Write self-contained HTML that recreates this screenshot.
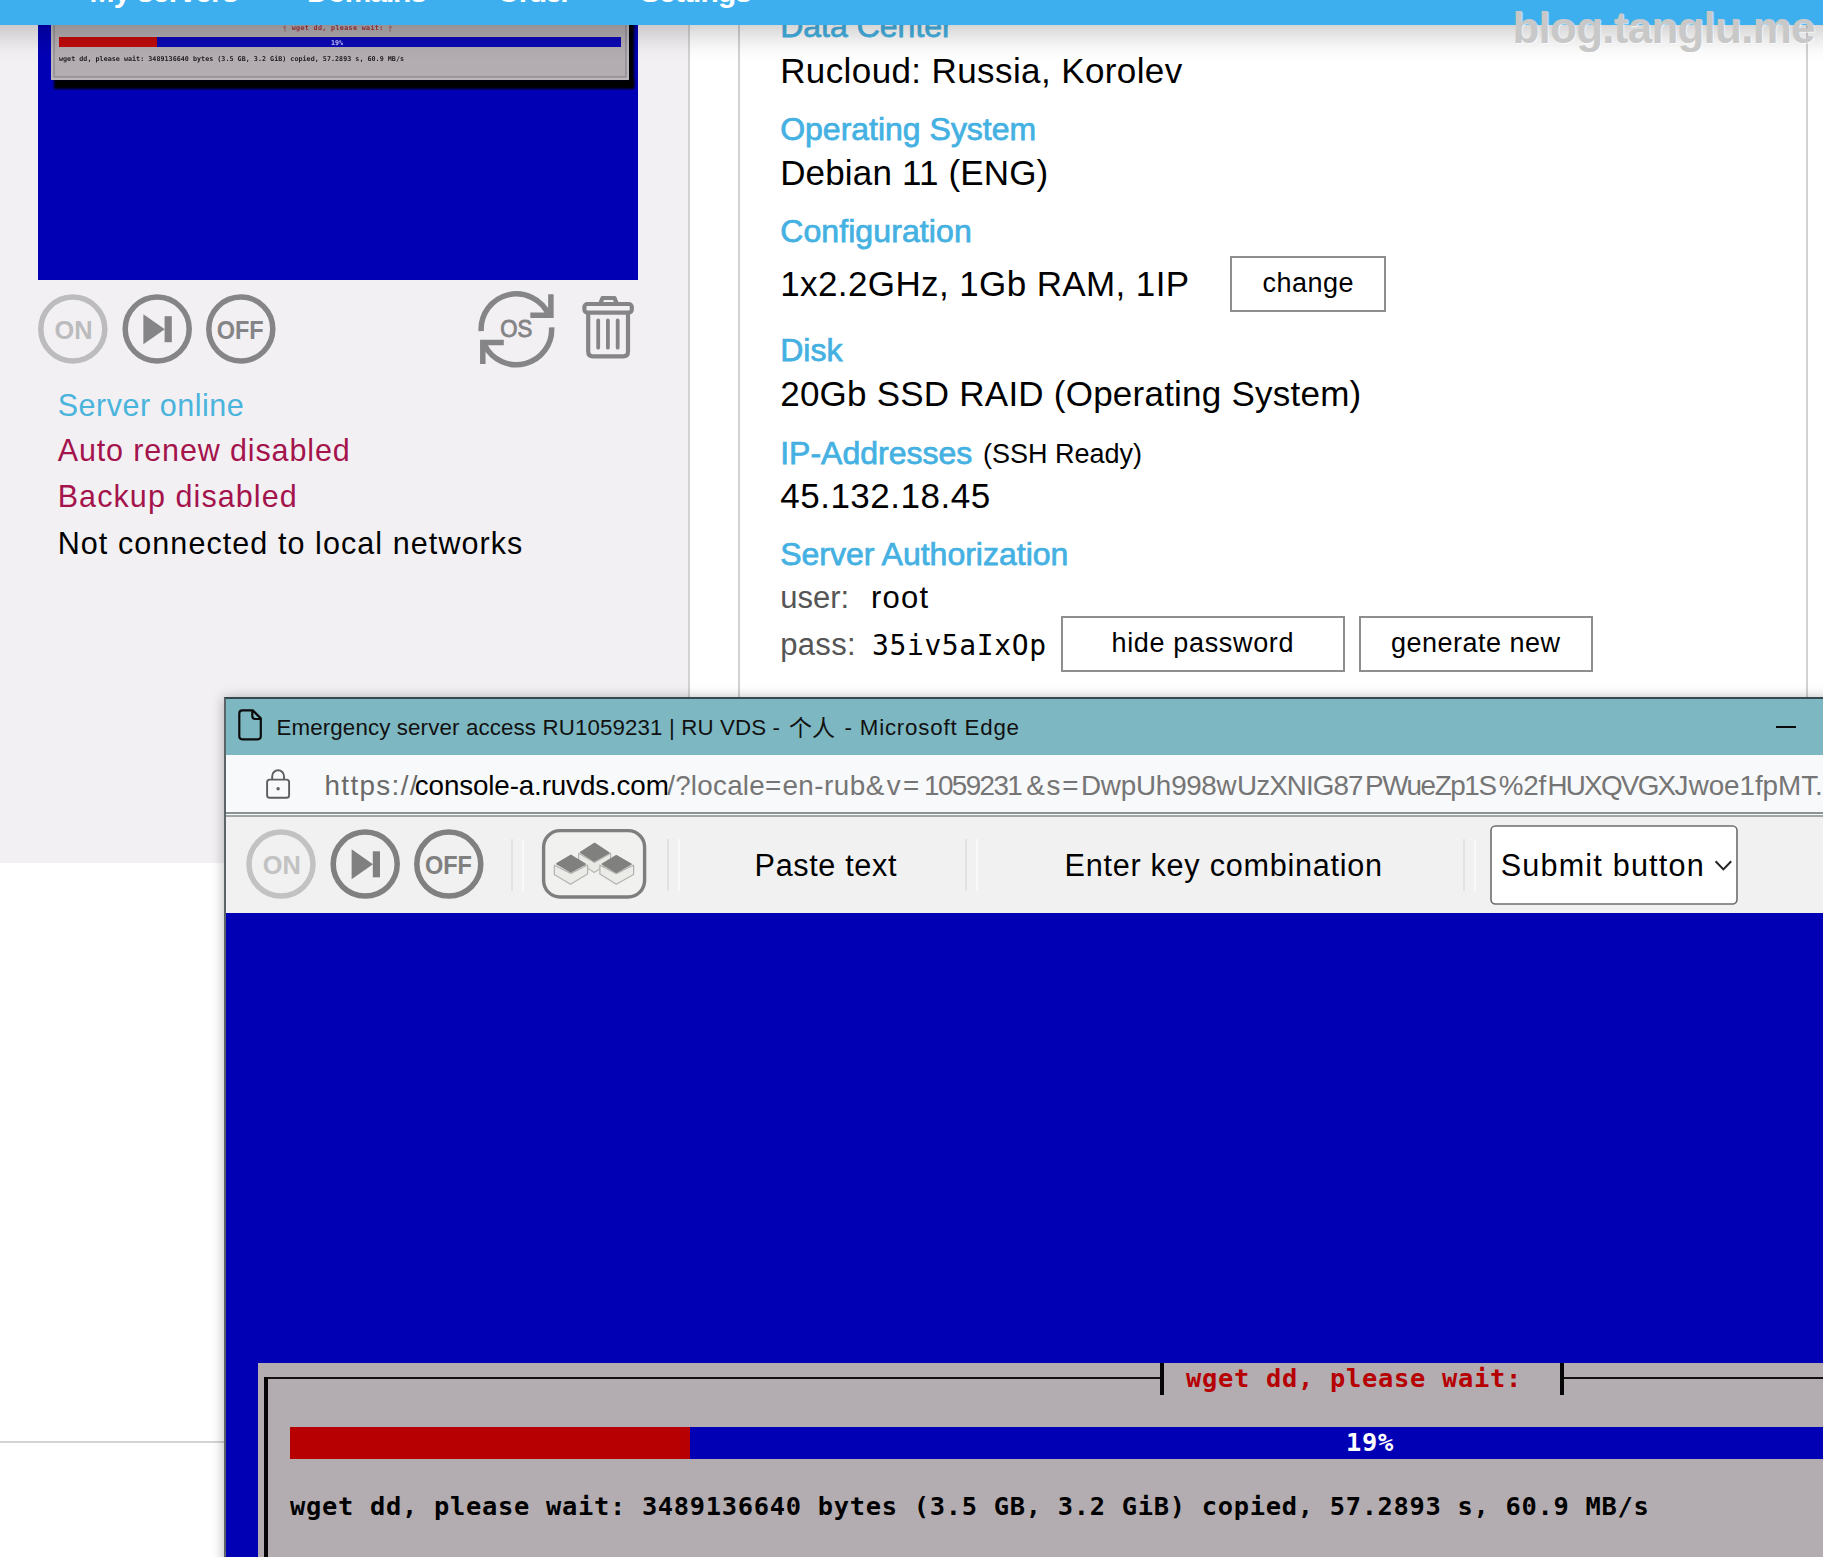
<!DOCTYPE html>
<html lang="en"><head><meta charset="utf-8"><title>Emergency server access RU1059231 | RU VDS</title>
<style>
html,body{margin:0;padding:0}
body{width:1823px;height:1557px;position:relative;overflow:hidden;background:#fff;font-family:"Liberation Sans",sans-serif}
.t{position:absolute;white-space:pre;line-height:1;margin:0;padding:0}
.abs{position:absolute}
#leftpanel{left:0;top:0;width:688px;height:863px;background:#f2f0f3;border-right:2px solid #d3d1d4}
#rightpanel{left:738px;top:0;width:1066px;height:700px;background:#fff;border-left:2px solid #d3d1d4;border-right:2px solid #d3d1d4}
#nav{left:0;top:0;width:1823px;height:25px;background:#3eafee;overflow:hidden;z-index:5}
#navshadow{left:0;top:25px;width:1823px;height:36px;background:linear-gradient(to bottom,rgba(0,0,0,.16) 0,rgba(0,0,0,.075) 40%,rgba(0,0,0,.018) 72%,rgba(0,0,0,0) 100%);z-index:4}
#thumb{left:38px;top:0;width:600px;height:280px;background:#0200b4;overflow:hidden}
.btn{border:2px solid #8e8e8e;background:#fff;box-sizing:border-box}
#footline{left:0;top:1441px;width:226px;height:1.5px;background:#d4d4d4}
#win{left:224px;top:697px;width:1610px;height:870px;background:#0200b4;border:2px solid #5d6468;border-top-color:#36494f;box-sizing:border-box;box-shadow:0 1px 12px rgba(0,0,0,.30);overflow:hidden}
#titlebar{left:0;top:0;width:1610px;height:56px;background:#7db7c2}
#urlbar{left:0;top:56px;width:1610px;height:57px;background:#f8f9fa}
#urlline{left:0;top:113px;width:1610px;height:5px;background:linear-gradient(to bottom,#8a9392 0,#8a9392 2px,#f4fbfa 2px,#f4fbfa 3.1px,#a0a6a6 3.1px,#a0a6a6 5px)}
#toolbar{left:0;top:118px;width:1610px;height:96px;background:#f1f1f2}
.sep{width:2px;height:52px;top:839px;background:#e2e2e3}
.sep2{width:2px;height:52px;top:839px;background:#f9f9fa}
#dialog{left:258px;top:1363px;width:1600px;height:220px;background:#b3adb1}
</style></head><body>

<!-- ===== page behind ===== -->
<div id="leftpanel" class="abs"></div>
<div id="rightpanel" class="abs"></div>
<div id="footline" class="abs"></div>

<!-- thumbnail -->
<div id="thumb" class="abs">
  <div class="abs" style="left:16px;top:79px;width:580px;height:9.5px;background:#000;filter:blur(1.2px)"></div>
  <div class="abs" style="left:590px;top:0;width:6px;height:87px;background:#000;filter:blur(1px)"></div>
  <div class="abs" style="left:13px;top:-4px;width:578px;height:84px;background:#b3adb1;box-shadow:inset 0 0 0 2.5px #bbb6ba, inset 0 0 0 3.5px #807c83;filter:blur(.5px)"></div>
  <div class="abs" style="left:21px;top:37px;width:562px;height:9.5px;background:#0b08b6;filter:blur(.4px)"></div>
  <div class="abs" style="left:21px;top:37px;width:98px;height:9.5px;background:#c00a0c;filter:blur(.4px)"></div>
  <span class="t" style='left:245.0px;top:25.0px;font-size:6.7px;color:#a03038;font-family:"DejaVu Sans Mono", monospace;font-weight:700;letter-spacing:0.348px;filter:blur(.6px);'>┤ wget dd, please wait: ├</span>
<span class="t" style='left:293.0px;top:39.5px;font-size:6.7px;color:#c8c8ff;font-family:"DejaVu Sans Mono", monospace;font-weight:700;letter-spacing:-0.047px;filter:blur(.6px);'>19%</span>
<span class="t" style='left:21.0px;top:56.0px;font-size:6.7px;color:#1c1a1c;font-family:"DejaVu Sans Mono", monospace;font-weight:700;letter-spacing:0.033px;filter:blur(.6px);'>wget dd, please wait: 3489136640 bytes (3.5 GB, 3.2 GiB) copied, 57.2893 s, 60.9 MB/s</span>
</div>

<!-- left icons -->
<svg class="abs" style="left:0;top:280px" width="700" height="100" viewBox="0 280 700 100" font-family="Liberation Sans, sans-serif">
  <g fill="none" stroke-width="5.5">
    <circle cx="72.8" cy="329" r="32" stroke="#bcbbbd"/>
    <circle cx="157.2" cy="329" r="32" stroke="#858486"/>
    <circle cx="240.8" cy="329" r="32" stroke="#858486"/>
  </g>
  <text x="73.5" y="339.2" font-size="26" font-weight="700" fill="#bcbbbd" text-anchor="middle" textLength="38" lengthAdjust="spacingAndGlyphs">ON</text>
  <text x="240.2" y="339.2" font-size="26" font-weight="700" fill="#858486" text-anchor="middle" textLength="47" lengthAdjust="spacingAndGlyphs">OFF</text>
  <path d="M143.4 314.2 L164.8 329.2 L143.4 344.2 Z" fill="#858486"/>
  <rect x="164.6" y="316.2" width="7.2" height="26" fill="#858486"/>
  <!-- OS reinstall -->
  <g fill="none" stroke="#858486" stroke-width="5.5" stroke-linejoin="miter">
    <path d="M481.2 331.2 A35.3 35.3 0 0 1 548.6 314.6"/>
    <path d="M550.9 294.3 L550.9 315.2 L530.3 315.2"/>
    <path d="M551.6 327.4 A35.3 35.3 0 0 1 484.6 344.9"/>
    <path d="M482.8 364 L482.8 342.4 L503.8 342.4"/>
  </g>
  <text x="516.3" y="337.3" font-size="23.5" fill="#858486" stroke="#858486" stroke-width=".9" text-anchor="middle" textLength="32" lengthAdjust="spacingAndGlyphs">OS</text>
  <!-- trash -->
  <g fill="none" stroke="#858486" stroke-width="4.2" stroke-linejoin="round" stroke-linecap="round">
    <path d="M600.5 303 L602.5 298 L614.5 298 L616.5 303"/>
    <rect x="584.4" y="304" width="47.4" height="8.6" rx="3"/>
    <path d="M588.2 313 L588.2 351.5 Q588.2 356.3 593 356.3 L623.2 356.3 Q628 356.3 628 351.5 L628 313"/>
    <path d="M598.2 320.5 V347.7 M607.9 320.5 V347.7 M617.7 320.5 V347.7" stroke-width="3.8"/>
  </g>
</svg>

<!-- buttons -->
<div class="abs btn" style="left:1230px;top:255.5px;width:155.5px;height:56px"></div>
<div class="abs btn" style="left:1061px;top:615.5px;width:283.5px;height:56px"></div>
<div class="abs btn" style="left:1359px;top:615.5px;width:234px;height:56px"></div>

<span class="t" style='left:57.7px;top:390.0px;font-size:30.5px;color:#4ab4dc;letter-spacing:0.523px;'>Server online</span>
<span class="t" style='left:57.7px;top:435.4px;font-size:30.5px;color:#a4134c;letter-spacing:0.867px;'>Auto renew disabled</span>
<span class="t" style='left:57.7px;top:481.4px;font-size:30.5px;color:#a4134c;letter-spacing:1.084px;'>Backup disabled</span>
<span class="t" style='left:57.7px;top:527.5px;font-size:30.5px;color:#000;letter-spacing:1.079px;'>Not connected to local networks</span>
<span class="t" style='left:780.2px;top:10.4px;font-size:32px;color:#44b1e2;-webkit-text-stroke:0.75px #44b1e2;'>Data Center</span>
<span class="t" style='left:780.2px;top:53.4px;font-size:35px;color:#000;letter-spacing:0.393px;'>Rucloud: Russia, Korolev</span>
<span class="t" style='left:780.2px;top:113.4px;font-size:32px;color:#44b1e2;letter-spacing:-0.007px;-webkit-text-stroke:0.75px #44b1e2;'>Operating System</span>
<span class="t" style='left:780.2px;top:155.0px;font-size:35px;color:#000;letter-spacing:0.153px;'>Debian 11 (ENG)</span>
<span class="t" style='left:780.2px;top:215.0px;font-size:32px;color:#44b1e2;letter-spacing:0.096px;-webkit-text-stroke:0.75px #44b1e2;'>Configuration</span>
<span class="t" style='left:780.2px;top:266.0px;font-size:35px;color:#000;letter-spacing:0.394px;'>1x2.2GHz, 1Gb RAM, 1IP</span>
<span class="t" style='left:1262.5px;top:270.0px;font-size:27px;color:#000;letter-spacing:0.481px;'>change</span>
<span class="t" style='left:780.2px;top:333.7px;font-size:32px;color:#44b1e2;-webkit-text-stroke:0.75px #44b1e2;'>Disk</span>
<span class="t" style='left:780.2px;top:376.0px;font-size:35px;color:#000;letter-spacing:0.232px;'>20Gb SSD RAID (Operating System)</span>
<span class="t" style='left:780.2px;top:437.0px;font-size:32px;color:#44b1e2;-webkit-text-stroke:0.75px #44b1e2;'>IP-Addresses</span>
<span class="t" style='left:983.0px;top:441.0px;font-size:27px;color:#000;'>(SSH Ready)</span>
<span class="t" style='left:780.2px;top:478.0px;font-size:35px;color:#000;letter-spacing:0.511px;'>45.132.18.45</span>
<span class="t" style='left:780.2px;top:538.3px;font-size:32px;color:#44b1e2;-webkit-text-stroke:0.75px #44b1e2;'>Server Authorization</span>
<span class="t" style='left:780.2px;top:582.0px;font-size:31px;color:#555;letter-spacing:0.020px;'>user:</span>
<span class="t" style='left:871.0px;top:582.0px;font-size:31px;color:#000;letter-spacing:1.193px;'>root</span>
<span class="t" style='left:780.2px;top:628.5px;font-size:31px;color:#555;letter-spacing:0.348px;'>pass:</span>
<span class="t" style='left:872.0px;top:631.5px;font-size:28px;color:#000;font-family:"DejaVu Sans Mono", monospace;letter-spacing:0.602px;'>35iv5aIxOp</span>
<span class="t" style='left:1111.5px;top:630.0px;font-size:27px;color:#000;letter-spacing:0.658px;'>hide password</span>
<span class="t" style='left:1391.0px;top:630.0px;font-size:27px;color:#000;letter-spacing:0.489px;'>generate new</span>

<div id="navshadow" class="abs"></div>
<div id="nav" class="abs"><span class="t" style='left:89.6px;top:-23.4px;font-size:30px;color:#fff;font-weight:700;letter-spacing:-0.866px;'>My servers</span>
<span class="t" style='left:307.0px;top:-23.4px;font-size:30px;color:#fff;font-weight:700;letter-spacing:-1.117px;'>Domains</span>
<span class="t" style='left:497.0px;top:-23.4px;font-size:30px;color:#fff;font-weight:700;letter-spacing:-1.676px;'>Order</span>
<span class="t" style='left:640.0px;top:-23.4px;font-size:30px;color:#fff;font-weight:700;letter-spacing:-0.908px;'>Settings</span></div>
<div class="abs" style="left:0;top:0;width:1823px;height:80px;z-index:6"><span class="t" style='left:1512.5px;top:6.0px;font-size:44px;color:#c8c8c8;font-weight:700;letter-spacing:-0.761px;text-shadow:1px 1px 1px rgba(255,255,255,.7);'>blog.tanglu.me</span></div>

<!-- ===== Edge popup window ===== -->
<div id="win" class="abs" style="z-index:10">
  <div id="titlebar" class="abs"></div>
  <div id="urlbar" class="abs"></div>
  <div id="urlline" class="abs"></div>
  <div id="toolbar" class="abs"></div>
</div>
<div class="abs" style="left:0;top:0;width:1823px;height:1557px;z-index:11;overflow:hidden">
  <!-- title icons -->
  <svg class="abs" style="left:230px;top:700px" width="80" height="110" viewBox="230 700 80 110" fill="none">
    <path d="M242.3 710.4 H252.8 L260.8 718.4 V736.3 Q260.8 739.3 257.8 739.3 H242.3 Q239.3 739.3 239.3 736.3 V713.4 Q239.3 710.4 242.3 710.4 Z M252.3 711 V716 Q252.3 719 255.3 719 H260.3" stroke="#0b0b0b" stroke-width="2.2" stroke-linejoin="round"/>
    <rect x="267.1" y="779.6" width="22" height="18.2" rx="2.6" stroke="#5e5e5e" stroke-width="1.9"/>
    <path d="M272.2 779.6 V776.2 A5.9 5.9 0 0 1 284 776.2 V779.6" stroke="#5e5e5e" stroke-width="1.9"/>
    <circle cx="278.1" cy="788.8" r="1.7" fill="#5e5e5e"/>
  </svg>
  <div class="abs" style="left:1775.5px;top:725.5px;width:20.5px;height:2.1px;background:#0b0b0b"></div>

  <!-- toolbar icons -->
  <svg class="abs" style="left:226px;top:815px" width="1597" height="98" viewBox="226 815 1597 98" font-family="Liberation Sans, sans-serif">
    <g fill="none" stroke-width="5.5">
      <circle cx="281" cy="864.1" r="32" stroke="#c2c2c2"/>
      <circle cx="365.2" cy="864.1" r="32" stroke="#808080"/>
      <circle cx="448.8" cy="864.1" r="32" stroke="#808080"/>
    </g>
    <text x="281.7" y="874.3" font-size="26" font-weight="700" fill="#c2c2c2" text-anchor="middle" textLength="38" lengthAdjust="spacingAndGlyphs">ON</text>
    <text x="448.4" y="874.3" font-size="26" font-weight="700" fill="#808080" text-anchor="middle" textLength="47" lengthAdjust="spacingAndGlyphs">OFF</text>
    <path d="M351.6 849.3 L373 864.3 L351.6 879.3 Z" fill="#808080"/>
    <rect x="372.8" y="851.3" width="7.2" height="26" fill="#808080"/>
    <!-- keyboard button -->
    <rect x="543.6" y="830.6" width="101" height="66.4" rx="16.5" fill="#f1f1f0" stroke="#7e7e7e" stroke-width="3.4"/>
    <g stroke-linejoin="round">
      <path d="M578.6 853.2 L578.6 862 L594.2 872.4 L610.6 862 L610.6 853.2 L594.4 862.5 Z" fill="#e9e9e6" stroke="#b6b6b4" stroke-width="1.2"/>
      <path d="M580.6 852.4 L594.6 843.5 L608.9 852.9 L594.2 861 Z" fill="#80807e" stroke="#80807e" stroke-width="1.6"/>
      <path d="M554.3 865.2 L554.3 874.6 L570.5 884.3 L587.6 874 L587.6 865 L570.9 873.4 Z" fill="#ebebe8" stroke="#b2b2b0" stroke-width="1.2"/>
      <path d="M556.9 863.8 L570.9 855.4 L585.2 864.1 L570.9 871.9 Z" fill="#80807e" stroke="#80807e" stroke-width="1.6"/>
      <path d="M599.9 865.2 L599.9 874 L616.3 884.3 L633.6 874.6 L633.6 865 L616.3 873.6 Z" fill="#ebebe8" stroke="#b2b2b0" stroke-width="1.2"/>
      <path d="M602.3 864.1 L616.3 855.7 L631 864.1 L616.3 872.2 Z" fill="#80807e" stroke="#80807e" stroke-width="1.6"/>
    </g>
    <!-- select -->
    <rect x="1491" y="826" width="246" height="78" rx="4.5" fill="#fff" stroke="#6d6d6d" stroke-width="1.6"/>
    <path d="M1715.6 861.3 L1723.4 869.4 L1731.2 861.3" fill="none" stroke="#222" stroke-width="2"/>
  </svg>
  <div class="abs sep" style="left:510.5px"></div><div class="abs sep2" style="left:521.5px"></div>
  <div class="abs sep" style="left:666.5px"></div><div class="abs sep2" style="left:677.5px"></div>
  <div class="abs sep" style="left:964.5px"></div><div class="abs sep2" style="left:975.5px"></div>
  <div class="abs sep" style="left:1462.5px"></div><div class="abs sep2" style="left:1473.5px"></div>
  <span class="t" style='left:276.5px;top:716.8px;font-size:22.3px;color:#111;letter-spacing:0.134px;'>Emergency server access RU1059231 | RU VDS -</span>
<span class="t" style='left:789.0px;top:715.0px;font-size:23px;color:#111;font-family:"Noto Sans CJK SC", sans-serif;'>个人</span>
<span class="t" style='left:844.5px;top:716.8px;font-size:22.3px;color:#111;letter-spacing:0.811px;'>- Microsoft Edge</span>
<span class="t" style='left:324.5px;top:771.5px;font-size:27.8px;color:#6a6a6a;letter-spacing:1.366px;'>https://</span>
<span class="t" style='left:414.8px;top:771.5px;font-size:27.8px;color:#000;letter-spacing:-0.137px;'>console-a.ruvds.com</span>
<span class="t" style='left:667.2px;top:771.5px;font-size:27.8px;color:#757575;letter-spacing:0.249px;'>/?locale=</span>
<span class="t" style='left:782.4px;top:771.5px;font-size:27.8px;color:#757575;letter-spacing:0.482px;'>en-rub</span>
<span class="t" style='left:865.7px;top:771.5px;font-size:27.8px;color:#757575;letter-spacing:2.481px;'>&amp;v=</span>
<span class="t" style='left:924.0px;top:771.5px;font-size:27.8px;color:#757575;letter-spacing:-1.576px;'>1059231</span>
<span class="t" style='left:1026.2px;top:771.5px;font-size:27.8px;color:#757575;letter-spacing:1.781px;'>&amp;s=</span>
<span class="t" style='left:1080.9px;top:771.5px;font-size:27.8px;color:#757575;letter-spacing:-0.195px;'>DwpUh</span>
<span class="t" style='left:1171.2px;top:771.5px;font-size:27.8px;color:#757575;letter-spacing:-0.393px;'>998w</span>
<span class="t" style='left:1237.1px;top:771.5px;font-size:27.8px;color:#757575;letter-spacing:-0.941px;'>UzXNIG87</span>
<span class="t" style='left:1365.0px;top:771.5px;font-size:27.8px;color:#757575;letter-spacing:-1.384px;'>PWueZp1S</span>
<span class="t" style='left:1498.8px;top:771.5px;font-size:27.8px;color:#757575;letter-spacing:-0.188px;'>%2f</span>
<span class="t" style='left:1547.4px;top:771.5px;font-size:27.8px;color:#757575;letter-spacing:-1.716px;'>HUXQVGXJ</span>
<span class="t" style='left:1688.7px;top:771.5px;font-size:27.8px;color:#757575;letter-spacing:-0.048px;'>woe1fpMT.</span>
<span class="t" style='left:754.6px;top:849.9px;font-size:30.6px;color:#000;letter-spacing:0.639px;'>Paste text</span>
<span class="t" style='left:1064.5px;top:849.9px;font-size:30.6px;color:#000;letter-spacing:0.740px;'>Enter key combination</span>
<span class="t" style='left:1500.7px;top:850.0px;font-size:30.6px;color:#000;letter-spacing:1.185px;'>Submit button</span>

  <!-- console dialog -->
  <div id="dialog" class="abs"></div>
  <div class="abs" style="left:264px;top:1377px;width:1600px;height:2px;background:#141012"></div>
  <div class="abs" style="left:264px;top:1377px;width:4px;height:200px;background:#060606"></div>
  <div class="abs" style="left:1164px;top:1363px;width:396px;height:32px;background:#b3adb1"></div>
  <div class="abs" style="left:1160px;top:1363px;width:4px;height:32px;background:#060606"></div>
  <div class="abs" style="left:1560px;top:1363px;width:4px;height:32px;background:#060606"></div>
  <div class="abs" style="left:290px;top:1427px;width:1600px;height:32px;background:#0200b4"></div>
  <div class="abs" style="left:290px;top:1427px;width:400px;height:32px;background:#b60002"></div>
  <span class="t" style='left:1186.0px;top:1365.7px;font-size:25.4px;color:#b60002;font-family:"DejaVu Sans Mono", monospace;font-weight:700;letter-spacing:0.708px;'>wget dd, please wait:</span>
<span class="t" style='left:1346.0px;top:1429.7px;font-size:25.4px;color:#fff;font-family:"DejaVu Sans Mono", monospace;font-weight:700;letter-spacing:0.708px;'>19%</span>
<span class="t" style='left:290.0px;top:1493.7px;font-size:25.4px;color:#000;font-family:"DejaVu Sans Mono", monospace;font-weight:700;letter-spacing:0.708px;'>wget dd, please wait: 3489136640 bytes (3.5 GB, 3.2 GiB) copied, 57.2893 s, 60.9 MB/s</span>
</div>
</body></html>
